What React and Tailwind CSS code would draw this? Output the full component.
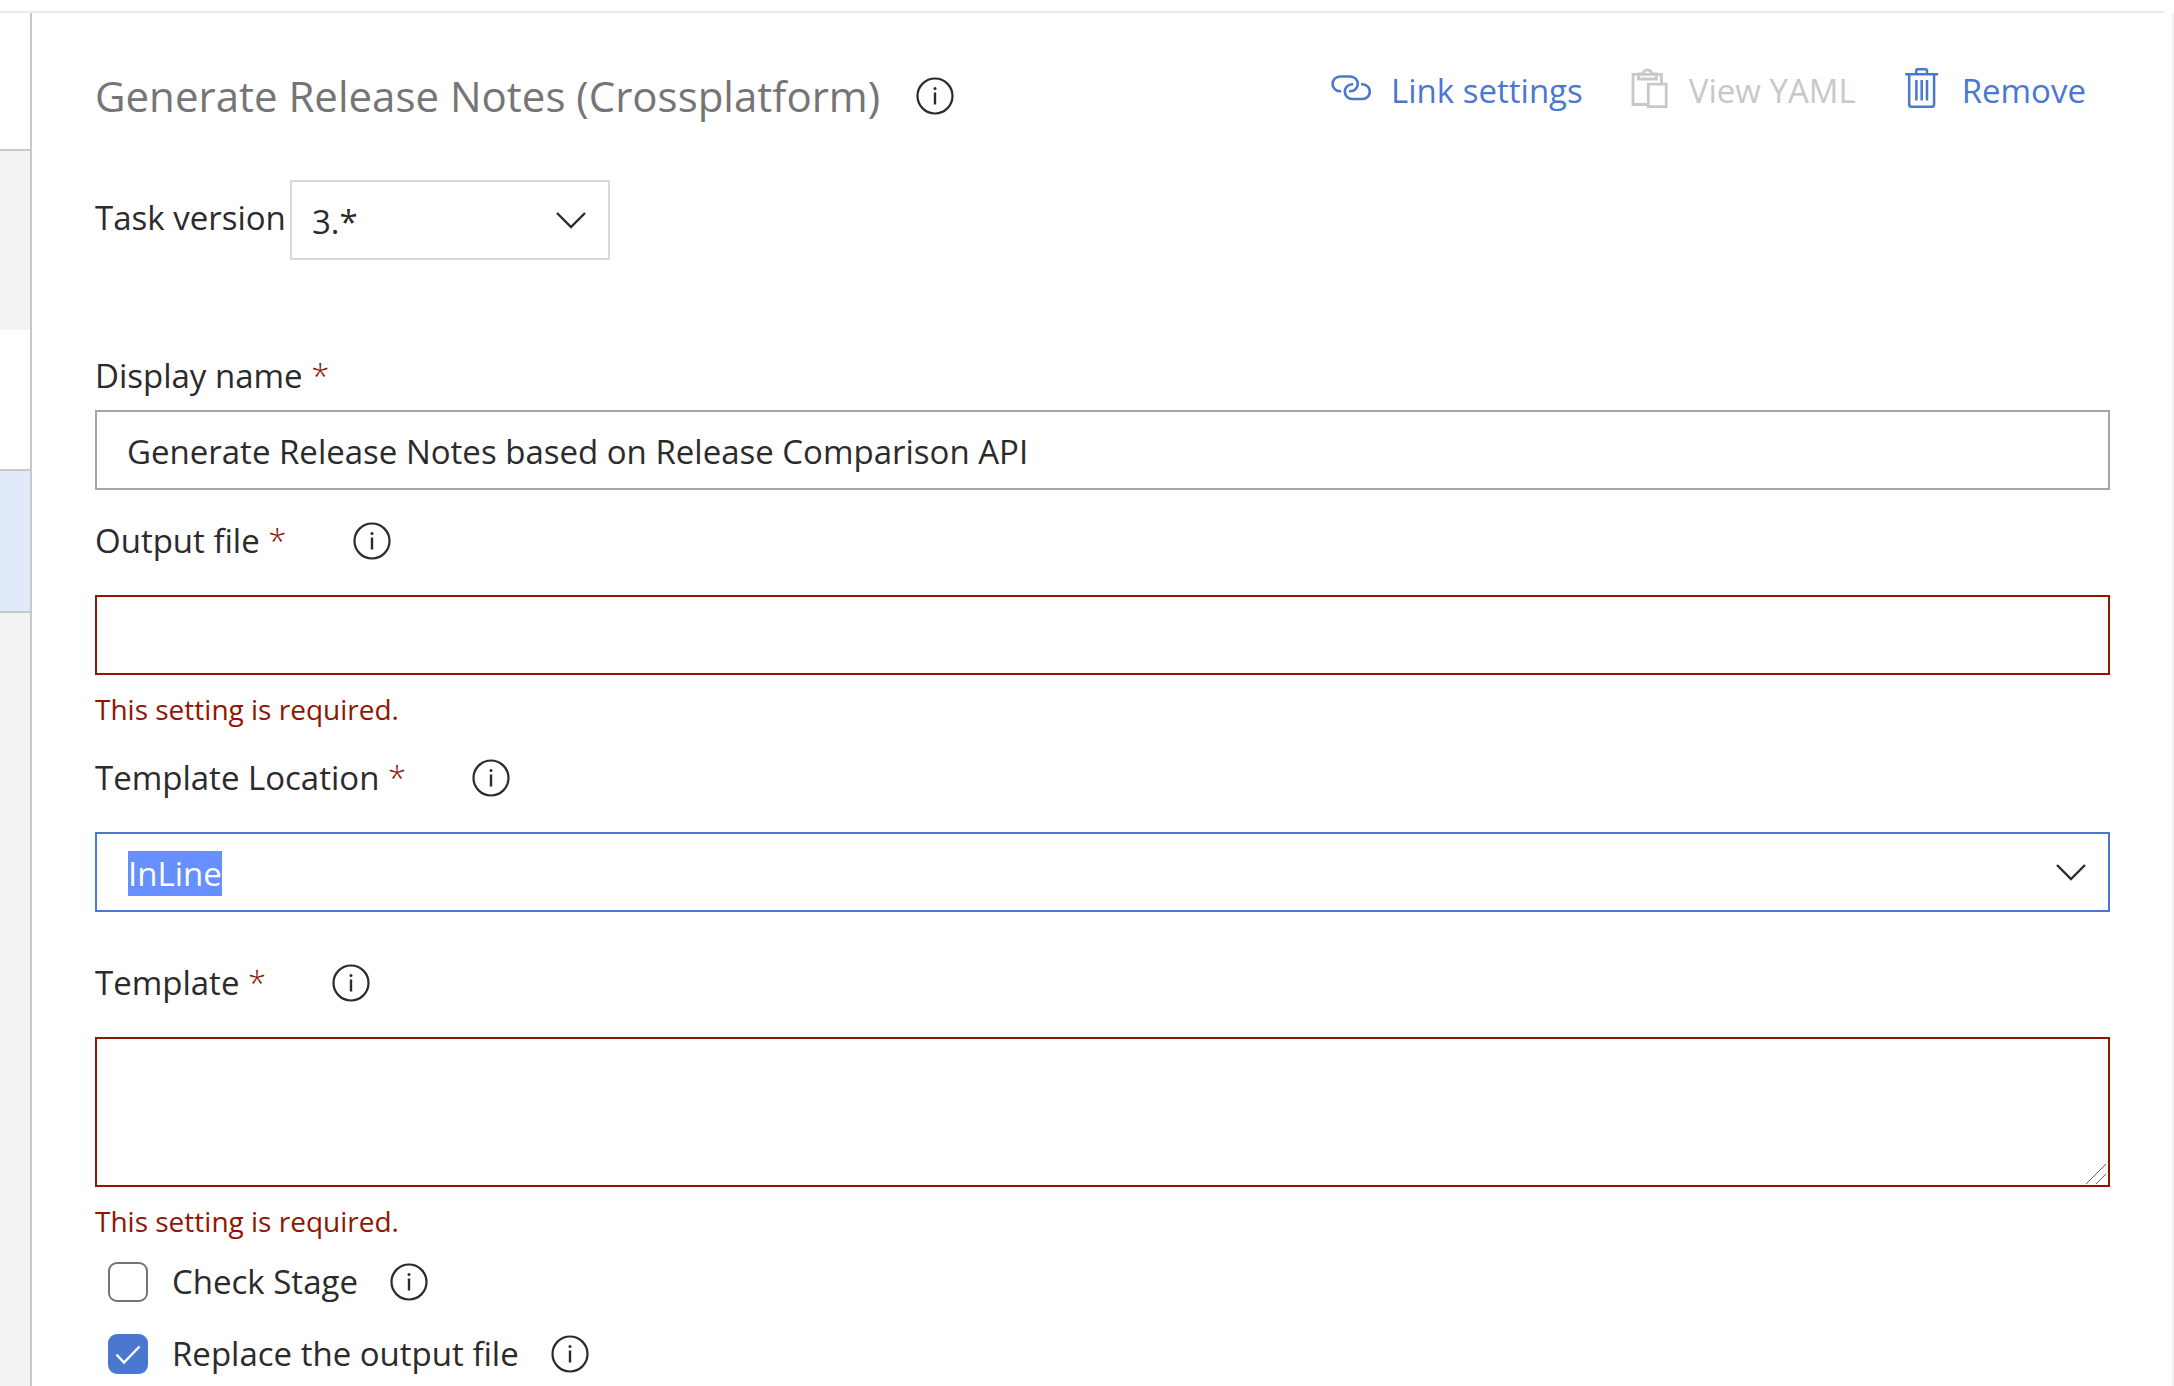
import { useEffect, useRef } from "react";

function InfoButton({ label }) {
  return (
    <button type="button" aria-label={label} className="shrink-0 text-[#2b2b2b]">
      <svg className="block size-[38px]" viewBox="0 0 38 38" fill="none" stroke="currentColor">
        <circle cx="19" cy="19" r="17.5" strokeWidth="2.2" />
        <path d="M19 15.5V27.5" strokeWidth="2.4" />
        <circle cx="19" cy="11.6" r="1.5" fill="currentColor" stroke="none" />
      </svg>
    </button>
  );
}

function LinkIcon() {
  return (
    <svg className="h-11 w-10 shrink-0" viewBox="0 0 40 44" fill="none" stroke="currentColor" strokeWidth="2.6">
      <path d="M10 25.3H9A7.4 7.4 0 0 1 9 10.5H19.4A7.4 7.4 0 0 1 19.4 25.3H18" />
      <path d="M22.2 18.2H21.2A7.4 7.4 0 0 0 21.2 33H31.4A7.4 7.4 0 0 0 31.4 18.2H30" />
    </svg>
  );
}

function ClipboardIcon() {
  return (
    <svg className="h-11 w-10 shrink-0" viewBox="0 0 40 44" fill="none" stroke="currentColor" strokeWidth="2.8">
      <path d="M18 38.5H4V8.4H32.4V17" />
      <path d="M9.5 8V13H27.5V8H22.6A4.2 4.2 0 0 0 14.2 8Z" />
      <path d="M19.3 18.2H37.2V40.6H19.3Z" />
    </svg>
  );
}

function TrashIcon() {
  return (
    <svg className="h-11 w-10 shrink-0" viewBox="0 0 40 44" fill="none" stroke="currentColor" strokeWidth="2.5">
      <path d="M3.3 8.3H36.2M14.2 8V4.5Q14.2 3.2 15.5 3.2H23.7Q25 3.2 25 4.5V8" />
      <path d="M7.2 8.3V38.5Q7.2 40.8 9.5 40.8H29.8Q32.1 40.8 32.1 38.5V8.3" />
      <path d="M14.4 14V34.5M19.7 14V34.5M25 14V34.5" />
    </svg>
  );
}

function Chevron() {
  return (
    <svg className="pointer-events-none absolute top-1/2 right-6 h-5 w-[30px] -translate-y-1/2" viewBox="0 0 30 20" fill="none" stroke="#2b2b2b" strokeWidth="2.4">
      <path d="M1 3L15 17L29 3" />
    </svg>
  );
}

function FieldLabel({ htmlFor, children, info }) {
  return (
    <div className="flex items-center gap-[66px]">
      <label htmlFor={htmlFor} className="leading-[48px]">
        {children} <span className="font-light text-[#8f1600]">*</span>
      </label>
      {info && <InfoButton label={"About " + children} />}
    </div>
  );
}

function RequiredMessage({ id }) {
  return <p id={id} className="mt-3.5 text-[28px] leading-10 text-[#8f1600]">This setting is required.</p>;
}

function CheckRow({ id, children, defaultChecked }) {
  return (
    <div className="flex h-10 items-center">
      <span className="grid size-10 shrink-0">
        <input
          id={id}
          type="checkbox"
          defaultChecked={defaultChecked}
          className="peer col-start-1 row-start-1 size-10 appearance-none rounded-[9px] border-2 border-[#757575] bg-white checked:border-[#4a78d0] checked:bg-[#4a78d0]"
        />
        <svg className="pointer-events-none col-start-1 row-start-1 hidden size-10 peer-checked:block" viewBox="0 0 40 40" fill="none" stroke="white" strokeWidth="2.4">
          <path d="M8.5 20.5L16 28.5L31.5 12.5" />
        </svg>
      </span>
      <label htmlFor={id} className="mr-8 ml-6 leading-[48px]">{children}</label>
      <InfoButton label={"About " + children} />
    </div>
  );
}

export default function App() {
  const locationRef = useRef(null);

  useEffect(() => {
    locationRef.current.focus({ preventScroll: true });
    locationRef.current.select();
  }, []);

  return (
    <div className="flex h-screen flex-col overflow-hidden bg-white font-['Open_Sans','Noto_Sans',sans-serif] text-[33px] text-[#2b2b2b]">
      <div className="mr-2.5 h-[13px] shrink-0 border-b-2 border-[#eaeaea]" />
      <div className="flex min-h-0 flex-1">
        <aside className="flex w-8 shrink-0 flex-col border-r-2 border-[#c8c8c8]">
          <div className="h-[138px] border-b-2 border-[#c8c8c8]" />
          <div className="h-[179px] bg-[#f3f3f3]" />
          <div className="h-[141px] border-b-2 border-[#c8c8c8]" />
          <div className="h-[142px] border-b-2 border-[#c8c8c8] bg-[#e0eafa]" />
          <div className="flex-1 bg-[#f3f3f3]" />
        </aside>

        <main className="min-w-0 flex-1 border-r-2 border-[#f3f3f3] pt-[53px] pr-[62px] pl-[63px]">
          <header className="flex items-start justify-between">
            <div className="flex items-center gap-9">
              <h1 className="text-[42px] leading-[60px] whitespace-nowrap text-[#757575]">Generate Release Notes (Crossplatform)</h1>
              <InfoButton label="About this task" />
            </div>
            <div className="flex gap-[46px] pr-6 leading-[50px] whitespace-nowrap text-[#4a78d0]">
              <button type="button" className="flex items-start gap-5"><LinkIcon />Link settings</button>
              <button type="button" disabled className="flex items-start gap-5 text-[#c8c8c8]"><ClipboardIcon />View YAML</button>
              <button type="button" className="flex items-start gap-5"><TrashIcon />Remove</button>
            </div>
          </header>

          <div className="mt-[54px] flex items-center">
            <label htmlFor="version" className="mb-1 w-[195px] shrink-0 leading-[48px] whitespace-nowrap">Task version</label>
            <div className="relative w-80">
              <select id="version" className="block h-20 w-full appearance-none border-2 border-[#d9d9d9] bg-white pt-1 pl-5">
                <option>3.*</option>
              </select>
              <Chevron />
            </div>
          </div>

          <form className="mt-[92px]">
            <FieldLabel htmlFor="name">Display name</FieldLabel>
            <input id="name" type="text" defaultValue="Generate Release Notes based on Release Comparison API" className="mt-2.5 block h-20 w-full border-2 border-[#a6a6a6] px-[30px] pt-0.5" />

            <div className="mt-[27px]">
              <FieldLabel htmlFor="output" info>Output file</FieldLabel>
              <input id="output" type="text" aria-describedby="output-error" className="mt-[30px] block h-20 w-full border-2 border-[#8f1600] px-[30px]" />
              <RequiredMessage id="output-error" />
            </div>

            <div className="mt-[25px]">
              <FieldLabel htmlFor="location" info>Template Location</FieldLabel>
              <div className="relative mt-[30px]">
                <input
                  ref={locationRef}
                  id="location"
                  type="text"
                  role="combobox"
                  aria-expanded="false"
                  defaultValue="InLine"
                  className="block h-20 w-full border-2 border-[#4a78d0] px-[31px] pt-0.5 outline-none selection:bg-[#6690ff] selection:text-white"
                />
                <Chevron />
              </div>
            </div>

            <div className="mt-[47px]">
              <FieldLabel htmlFor="template" info>Template</FieldLabel>
              <div className="relative mt-[30px]">
                <textarea id="template" aria-describedby="template-error" className="block h-[150px] w-full resize-y border-2 border-[#8f1600] px-[30px] [&::-webkit-resizer]:bg-transparent" />
                <svg className="pointer-events-none absolute right-1 bottom-[3px] size-5" viewBox="0 0 20 20" stroke="#606060" strokeWidth="1">
                  <path d="M0 20L20 0M10 20L20 10" />
                </svg>
              </div>
              <RequiredMessage id="template-error" />
            </div>

            <div className="mt-[21px] ml-[13px] flex flex-col gap-8">
              <CheckRow id="check-stage">Check Stage</CheckRow>
              <CheckRow id="replace" defaultChecked>Replace the output file</CheckRow>
            </div>
          </form>
        </main>
      </div>
    </div>
  );
}
